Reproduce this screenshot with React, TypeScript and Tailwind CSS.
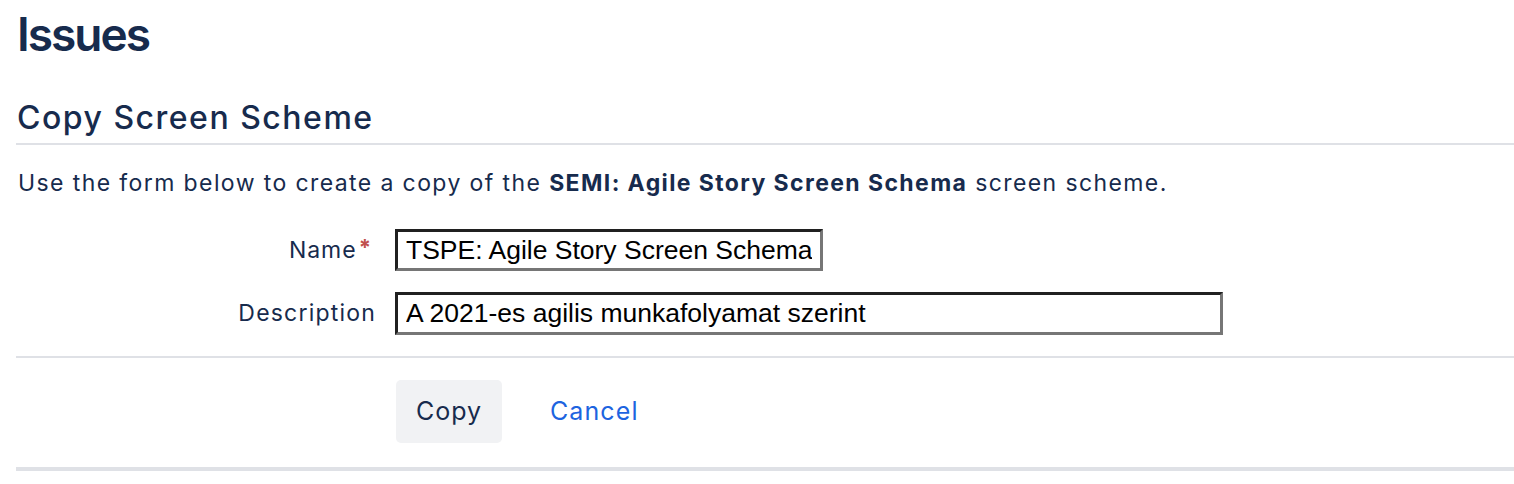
export default function App() {
  return (
    <main className="bg-white pl-4 text-[#172B4D]" style={{ fontFamily: 'Inter, "Noto Sans", sans-serif' }}>
      <h1 className="pl-[1px] pt-[6px] text-[46px] font-semibold leading-[56px] tracking-[-2px]">Issues</h1>

      <h2 className="mt-[37px] border-b-2 border-[#dfe1e6] pb-[6px] pl-[1px] text-[32px] font-medium leading-[38px] tracking-[1.5px]">
        Copy Screen Scheme
      </h2>

      <p className="mt-[23px] pl-[2px] text-[23px] leading-[30px] tracking-[1.4px]">
        Use the form below to create a copy of the <strong className="font-bold">SEMI: Agile Story Screen Schema</strong> screen
        scheme.
      </p>

      <form className="mt-[31px]">
        <div className="flex items-center">
          <label className="w-[360px] pr-[4px] text-right text-[23px] tracking-[1px]">
            Name<span className="relative top-[-3px] ml-[2px] text-[22px] font-bold text-[#c0504d]">*</span>
          </label>
          <input
            defaultValue="TSPE: Agile Story Screen Schema"
            className="ml-[19px] h-[42px] w-[428px] border-[3px] border-t-[#202020] border-l-[#202020] border-r-[#767676] border-b-[#767676] px-[8px] text-[26.5px] text-black"
            style={{ fontFamily: '"Liberation Sans", Arial, sans-serif', borderStyle: 'solid' }}
          />
        </div>
        <div className="mt-[21px] flex items-center">
          <label className="w-[360px] text-right text-[23px] tracking-[1.2px]">Description</label>
          <input
            defaultValue="A 2021-es agilis munkafolyamat szerint"
            className="ml-[19px] h-[43px] w-[828px] border-[3px] border-t-[#202020] border-l-[#202020] border-r-[#767676] border-b-[#767676] px-[8px] text-[26.5px] text-black"
            style={{ fontFamily: '"Liberation Sans", Arial, sans-serif', borderStyle: 'solid' }}
          />
        </div>

        <div className="mt-[21px] border-t-2 border-[#dfe1e6] pt-[22px]">
          <div className="flex items-center pl-[380px]">
            <button type="button" className="h-[63px] w-[106px] rounded-[5px] bg-[#f1f2f4] text-[25px] tracking-[1px] text-[#172B4D]">
              Copy
            </button>
            <a href="#" className="ml-[48px] text-[25px] tracking-[1.1px] text-[#1d64e0]">
              Cancel
            </a>
          </div>
        </div>
        <div className="mt-[24px] h-[4px] bg-[#dfe1e6]" />
      </form>
    </main>
  );
}
